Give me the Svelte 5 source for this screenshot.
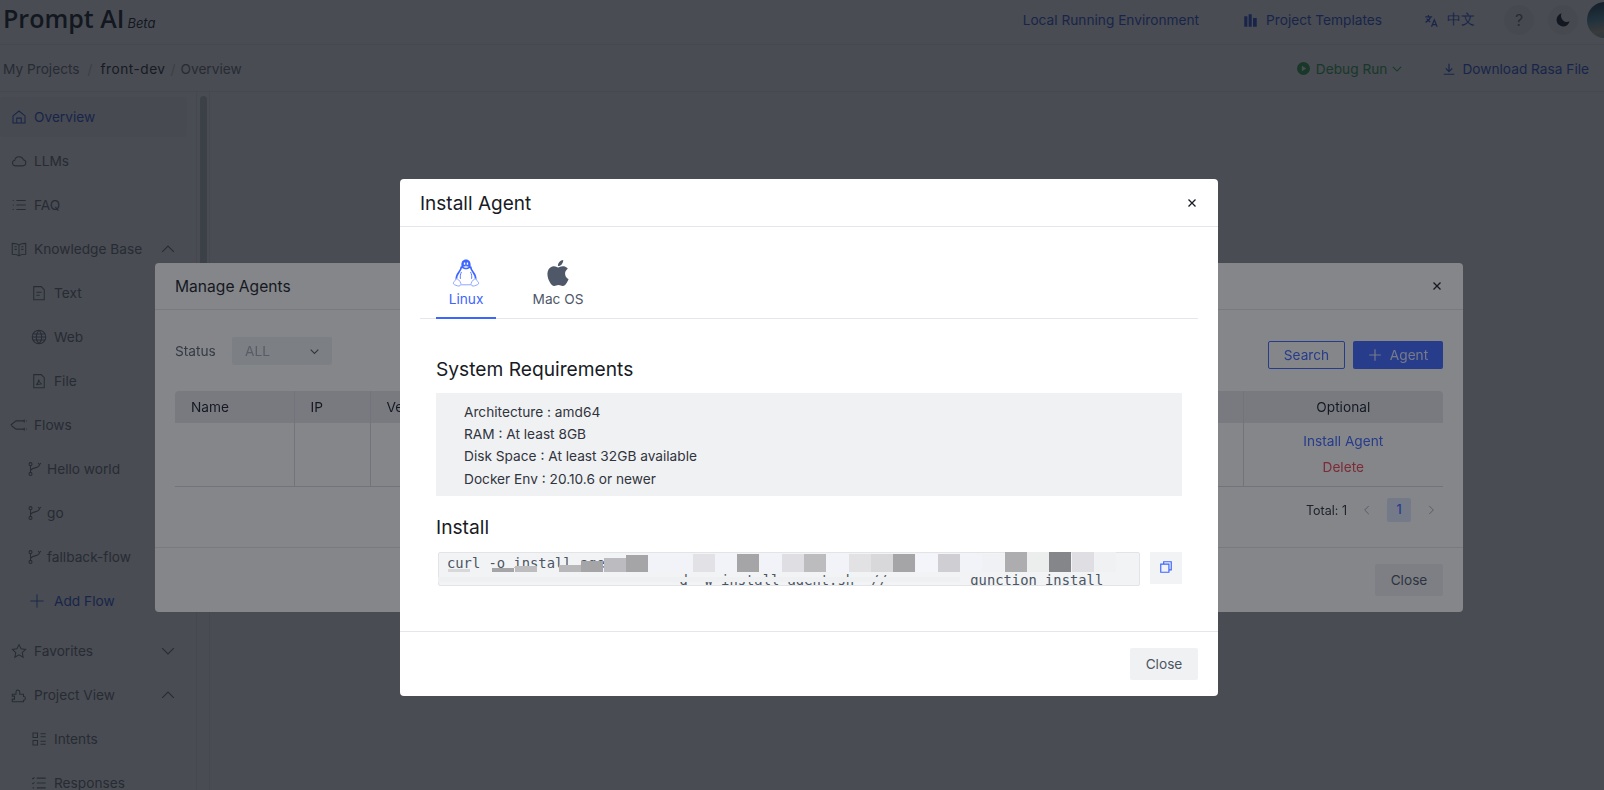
<script>
  const icons = {
    home: 'M4 10.5 12 4l8 6.5V20H4z M9 20v-6.5h6V20',
    cloud: 'M7 18.5h10a4.2 4.2 0 0 0 .8-8.3A6 6 0 0 0 6.3 11 3.8 3.8 0 0 0 7 18.5z',
    list: 'M8.5 6H21 M8.5 12H21 M8.5 18H21 M3.5 6h1.5 M3.5 12h1.5 M3.5 18h1.5',
    book: 'M12 6.5C10 5 7 4.5 3 4.5v14.5c4 0 7 .5 9 2 2-1.500 5-2 9-2V4.500c-4 0-7 .5-9 2z M12 6.500V21 M6 9h3 M6 12.500h3 M15 9h3 M15 12.500h3',
    doc: 'M5 3.500h10l4 4V21H5z M8.500 11h7 M8.500 15h4.500',
    globe: 'M12 3a9 9 0 1 0 0 18 9 9 0 0 0 0-18z M3 12h18 M4.500 8h15 M4.500 16h15 M12 3c-5 5-5 13 0 18 M12 3c5 5 5 13 0 18',
    pdf: 'M5 3.500h10l4 4V21H5z M8.500 17c2-1.500 3-4.500 3-7 .5 3 2 5 4 6-2-.2-4.500.2-7 1z',
    flows: 'M1 12 8 6.500h11 M1 12l7 5.500h11 M19 4.500v4 M19 15.500v4 M21.500 6.500h1 M21.500 17.500h1',
    branch: 'M6 7v10 M18 6c0 6-12 3-12 9 M6 3.500a2 2 0 1 0 0 4 2 2 0 0 0 0-4z M6 16.500a2 2 0 1 0 0 4 2 2 0 0 0 0-4z M16 4l2 2 2-2',
    plus: 'M12 2v20 M2 12h20',
    star: 'M12 3.500l2.700 5.600 6.100.8-4.500 4.200 1.200 6.100L12 17.200l-5.500 3 1.200-6.100-4.500-4.200 6.100-.8z',
    puzzle: 'M3 11h5V8a2.500 2.500 0 0 1 5 0v3h5v3a2.500 2.500 0 0 1 0 5v2H3v-3.500h3v-4H3z',
    intents: 'M4 4h6v6H4z M4 14h6v6H4z M14 5h7 M14 9h7 M14 15h7 M14 19h7',
    responses: 'M9 5.500h12 M9 12h12 M9 18.500h12 M3 5.500l1 1 2-2 M3 12l1 1 2-2 M3.500 18.500h2',
    up: 'M5 15.500l7-7 7 7',
    down: 'M5 8.500l7 7 7-7'
  };

  const nav = [
    { label: 'Overview', icon: 'home', cls: 'active' },
    { label: 'LLMs', icon: 'cloud' },
    { label: 'FAQ', icon: 'list' },
    { label: 'Knowledge Base', icon: 'book', arrow: 'up' },
    { label: 'Text', icon: 'doc', cls: 'sub' },
    { label: 'Web', icon: 'globe', cls: 'sub' },
    { label: 'File', icon: 'pdf', cls: 'sub' },
    { label: 'Flows', icon: 'flows' },
    { label: 'Hello world', icon: 'branch', cls: 'flow' },
    { label: 'go', icon: 'branch', cls: 'flow' },
    { label: 'fallback-flow', icon: 'branch', cls: 'flow' },
    { label: 'Add Flow', icon: 'plus', cls: 'add' },
    { label: 'Favorites', icon: 'star', arrow: 'down', cls: 'group' },
    { label: 'Project View', icon: 'puzzle', arrow: 'up' },
    { label: 'Intents', icon: 'intents', cls: 'sub' },
    { label: 'Responses', icon: 'responses', cls: 'sub' }
  ];

  const requirements = [
    'Architecture : amd64',
    'RAM : At least 8GB',
    'Disk Space : At least 32GB available',
    'Docker Env : 20.10.6 or newer'
  ];

  // redacted part of the command: [left, top, color]
  const mosaic = [
    [448, 569, '#d8d8da'], [492, 568, '#a5a5a8'], [515, 566, '#bdbdc0'],
    [559, 565, '#b8b8ba'], [581, 561, '#a5a5a8'], [604, 558, '#bcbcc0'],
    [626, 555, '#a5a5a8'], [648, 554, '#f2f3f8'], [670, 554, '#f2f3f8'],
    [693, 554, '#e2e2e6'], [715, 554, '#f2f3f8'], [737, 554, '#a5a5a8'],
    [760, 554, '#f2f3f8'], [782, 554, '#dfdfe3'], [804, 554, '#bcbcbf'],
    [827, 554, '#f2f3f8'], [849, 554, '#e2e2e4'], [871, 554, '#d8d8da'],
    [893, 554, '#a5a5a8'], [916, 554, '#f4f5fa'], [938, 554, '#cfcfd3'],
    [960, 554, '#f2f3f8'], [982, 554, '#f0f1f5'], [1005, 552, '#adadb0'],
    [1027, 552, '#eceeee'], [1049, 552, '#858689'], [1072, 552, '#dfdfe3'],
    [1094, 552, '#f0f1f3']
  ];
</script>

<div class="page">
  <header class="topbar">
    <div class="brand"><span>Prompt AI</span><em>Beta</em></div>
    <nav class="topnav">
      <a class="local">Local Running Environment</a>
      <a class="templates">
        <svg viewBox="0 0 24 24" width="15" height="15" fill="currentColor"><path d="M2 5h5v17H2z M9 2h5v20H9z M16 8h6v14h-6z" /></svg>
        Project Templates
      </a>
      <a class="lang">
        <svg viewBox="0 0 24 24" width="15" height="15" fill="none" stroke="currentColor" stroke-width="2"><path d="M2 6h11 M7 3v3 M10.500 6c-1 4-4 7-8 9 M4.500 9c1 2.500 3 4 5.500 5.500 M12 22l4.500-11L21 22 M13.500 18.500h6" /></svg>
        中文
      </a>
      <button class="round">?</button>
      <button class="round moon">
        <svg viewBox="0 0 24 24" width="16" height="16" fill="currentColor"><path d="M10 2a10 10 0 1 0 12 12A9 9 0 0 1 10 2z" /></svg>
      </button>
      <span class="avatar"></span>
    </nav>
  </header>

  <div class="crumbs">
    <span>My Projects</span><i>/</i><span class="dark">front-dev</span><i>/</i><span>Overview</span>
    <div class="actions">
      <a class="debug">
        <svg viewBox="0 0 24 24" width="13" height="13"><circle cx="12" cy="12" r="12" fill="currentColor" /><path d="M9 7l8 5-8 5z" fill="#fff" /></svg>
        Debug Run
        <svg class="chev" viewBox="0 0 24 24" width="14" height="14" fill="none" stroke="currentColor" stroke-width="2"><path d={icons.down} /></svg>
      </a>
      <a class="download">
        <svg viewBox="0 0 24 24" width="14" height="14" fill="none" stroke="currentColor" stroke-width="2"><path d="M12 3v13 M6.500 11l5.500 5.500 5.500-5.500 M3 21h18" /></svg>
        Download Rasa File
      </a>
    </div>
  </div>

  <div class="main">
    <aside class="sidebar">
      {#each nav as item}
        <div class="item {item.cls ?? ''}">
          <svg viewBox="0 0 24 24" fill="none" stroke="currentColor" stroke-width="1.4"><path d={icons[item.icon]} /></svg>
          <span>{item.label}</span>
          {#if item.arrow}
            <svg class="arrow" viewBox="0 0 24 24" fill="none" stroke="currentColor" stroke-width="1.4"><path d={icons[item.arrow]} /></svg>
          {/if}
        </div>
      {/each}
    </aside>
    <div class="track"><div class="thumb"></div></div>
    <div class="content"></div>
  </div>
</div>

<div class="overlay">
  <section class="dialog manage">
    <div class="dialog-head">
      <h2>Manage Agents</h2>
      <svg class="close" viewBox="0 0 12 12" width="12" height="12" fill="none" stroke="currentColor" stroke-width="1.300"><path d="M2.500 2.500l7 7 M9.500 2.500l-7 7" /></svg>
    </div>
    <div class="manage-body">
      <div class="filters">
        <label for="status">Status</label>
        <div id="status" class="select">ALL
          <svg viewBox="0 0 24 24" width="13" height="13" fill="none" stroke="currentColor" stroke-width="2"><path d={icons.down} /></svg>
        </div>
        <button class="outline">Search</button>
        <button class="primary">
          <svg viewBox="0 0 24 24" width="14" height="14" fill="none" stroke="currentColor" stroke-width="2"><path d={icons.plus} /></svg>
          Agent
        </button>
      </div>
      <table>
        <colgroup><col style="width:119px" /><col style="width:76px" /><col /><col style="width:200px" /></colgroup>
        <thead>
          <tr><th>Name</th><th>IP</th><th>Version</th><th class="center">Optional</th></tr>
        </thead>
        <tbody>
          <tr>
            <td></td><td></td><td></td>
            <td class="center ops"><a>Install Agent</a><a class="del">Delete</a></td>
          </tr>
        </tbody>
      </table>
      <div class="pager">
        <span>Total: 1</span>
        <svg viewBox="0 0 24 24" width="14" height="14" fill="none" stroke="currentColor" stroke-width="1.600"><path d="M15 5l-7 7 7 7" /></svg>
        <b>1</b>
        <svg viewBox="0 0 24 24" width="14" height="14" fill="none" stroke="currentColor" stroke-width="1.600"><path d="M9 5l7 7-7 7" /></svg>
      </div>
    </div>
    <div class="dialog-foot"><button class="plain">Close</button></div>
  </section>
</div>

<div class="overlay">
  <section class="dialog install">
    <div class="dialog-head">
      <h2>Install Agent</h2>
      <svg class="close" viewBox="0 0 12 12" width="12" height="12" fill="none" stroke="currentColor" stroke-width="1.300"><path d="M2.500 2.500l7 7 M9.500 2.500l-7 7" /></svg>
    </div>
    <div class="install-body">
      <div class="tabs">
        <div class="tab current">
          <svg viewBox="0 0 26 28" width="28" height="30" fill="none" stroke="currentColor">
            <path d="M13 1.500c-3 0-4.300 2.200-4.300 4.800v2.500c1.200.8 2.800 1.700 4.300 1.700s3.100-.9 4.300-1.700V6.300c0-2.600-1.300-4.800-4.300-4.800z" fill="currentColor" stroke="none" />
            <path d="M11 4.200h1.300v2H11z M13.700 4.200H15v2h-1.300z" fill="#fff" stroke="none" />
            <path d="M10.200 8.200c1 .9 1.900 1.300 2.800 1.300s1.800-.4 2.800-1.300c-1-.4-1.900-1-2.800-1s-1.800.6-2.800 1z" fill="#c4d0ff" stroke="none" />
            <path d="M8.700 8c0 2-1 3.500-2.200 5-1.500 2-2.700 4-2.500 6.500 M17.300 8c0 2 1 3.500 2.200 5 1.500 2 2.700 4 2.500 6.500" stroke-width="1.600" />
            <path d="M8.800 13c-1 2-1.500 4-1 6.500 M17.200 13c1 2 1.500 4 1 6.500" stroke-width="0.800" />
            <path d="M1.200 23.500c0-1.200 1.800-2 2.400-4 1.700-.3 3.900 1.700 4.600 4.300.4 1.700-1.200 2.900-3.100 2.200-1.900-.8-3.900-1-3.900-2.500z M24.800 23.500c0-1.200-1.800-2-2.400-4-1.700-.3-3.900 1.700-4.600 4.300-.4 1.700 1.200 2.900 3.100 2.200 1.900-.8 3.900-1 3.900-2.500z M8.500 25h9" stroke="#8aa2ff" stroke-width="0.900" fill="#fff" />
          </svg>
          <span>Linux</span>
        </div>
        <div class="tab">
          <svg viewBox="0 0 24 24" width="26" height="26" fill="currentColor"><path d="M12.152 6.896c-.948 0-2.415-1.078-3.960-1.040-2.040.027-3.910 1.183-4.961 3.014-2.117 3.675-.546 9.103 1.519 12.090 1.013 1.454 2.208 3.090 3.792 3.039 1.520-.065 2.090-.987 3.935-.987 1.831 0 2.350.987 3.960.948 1.637-.026 2.676-1.480 3.676-2.948 1.156-1.688 1.636-3.325 1.662-3.415-.039-.013-3.182-1.221-3.220-4.857-.026-3.040 2.480-4.494 2.597-4.559-1.429-2.090-3.623-2.324-4.390-2.376-2-.156-3.675 1.090-4.610 1.090zM15.530 3.830c.843-1.012 1.400-2.427 1.245-3.830-1.207.052-2.662.805-3.532 1.818-.78.896-1.454 2.338-1.273 3.714 1.338.104 2.715-.688 3.559-1.701" /></svg>
          <span>Mac OS</span>
        </div>
      </div>

      <h3 class="first">System Requirements</h3>
      <ul class="reqs">
        {#each requirements as line}
          <li>{line}</li>
        {/each}
      </ul>

      <h3>Install</h3>
      <div class="command">
        <pre>curl -o install_agent
                            d -w install_agent.sh  //  -- -- _ gunction install</pre>
        <button class="copy" aria-label="copy">
          <svg viewBox="0 0 24 24" width="14" height="14" fill="none" stroke="currentColor" stroke-width="2"><path d="M8 7V3h13v14h-4 M3 7h14v14H3z" /></svg>
        </button>
      </div>
    </div>
    <div class="dialog-foot"><button class="plain">Close</button></div>
  </section>
</div>

<div class="redact">
  {#each mosaic as [left, top, color]}
    <span class="cell" style="left:{left}px;top:{top}px;height:{572 - top}px;background:{color}"></span>
  {/each}
  <span class="band"></span>
</div>

<style>
  :global(body) {
    background: #fff;
    overflow: hidden;
    font-family: Inter, 'Liberation Sans', sans-serif;
    font-size: 13.7px;
    color: #111827;
  }

  .page {
    height: 790px;
    display: flex;
    flex-direction: column;
    overflow: hidden;
  }

  .topbar {
    height: 45px;
    flex: none;
    display: flex;
    align-items: flex-start;
    justify-content: space-between;
    border-bottom: 1px solid #eef0f3;
    box-sizing: border-box;
  }

  .brand {
    display: flex;
    align-items: baseline;
    gap: 3px;
    margin: 1px 0 0 3px;
    font-family: 'Open Sans', sans-serif;
    font-size: 25px;
    font-weight: 600;
    line-height: 34px;
    color: #111827;
  }

  .brand em {
    font-family: Inter, sans-serif;
    font-size: 13px;
    font-weight: 400;
  }

  .topnav {
    display: flex;
    align-items: center;
    height: 40px;
    color: #2f55e0;
  }

  .topnav a {
    display: flex;
    align-items: center;
    gap: 8px;
  }

  .local {
    margin-right: 44px;
  }

  .templates {
    margin-right: 42px;
  }

  .lang {
    margin-right: 29px;
  }

  .round {
    width: 30px;
    height: 30px;
    border: 0;
    border-radius: 50%;
    background: #f4f5f7;
    color: #6b7280;
    font: 16px Inter, sans-serif;
    padding: 0;
    margin-right: 14px;
    display: flex;
    align-items: center;
    justify-content: center;
  }

  .moon {
    color: #111827;
    margin-right: 9px;
  }

  .avatar {
    width: 36px;
    height: 36px;
    margin-right: -19px;
    border-radius: 50%;
    background: linear-gradient(170deg, #16324a 0%, #4f8ea6 45%, #b9b09a 75%, #7ca7b8 100%);
  }

  .crumbs {
    height: 47px;
    flex: none;
    box-sizing: border-box;
    display: flex;
    align-items: center;
    padding: 1px 15px 0 3px;
    border-bottom: 1px solid #eef0f3;
    color: #6b7280;
  }

  .crumbs i {
    font-style: normal;
    margin: 0 8px;
    color: #c6c9d0;
  }

  .crumbs .dark {
    color: #262a33;
    letter-spacing: 0.5px;
  }

  .crumbs .dark + i {
    margin: 0 5px;
  }

  .actions {
    margin-left: auto;
    display: flex;
    align-items: center;
    gap: 38px;
  }

  .actions a {
    display: flex;
    align-items: center;
    gap: 6px;
  }

  .debug {
    color: #2fa84f;
  }

  .chev {
    margin-left: -3px;
  }

  .download {
    color: #2f55e0;
  }

  .main {
    flex: 1;
    display: flex;
    min-height: 0;
  }

  .sidebar {
    width: 197px;
    flex: none;
    box-sizing: border-box;
    padding: 5px 9px 0 0;
    border-right: 1px solid #eef0f3;
    color: #6b7280;
  }

  .item {
    height: 40px;
    margin-bottom: 4px;
    display: flex;
    align-items: center;
    padding-left: 10px;
    border-radius: 4px;
  }

  .item svg {
    width: 18px;
    height: 18px;
    flex: none;
    margin-right: 6px;
  }

  .item .arrow {
    width: 20px;
    height: 20px;
    margin: 0 0 0 auto;
    position: relative;
    left: -9px;
  }

  .item.active {
    background: #f6f7f9;
    color: #2f55e0;
  }

  .item.sub {
    padding-left: 30px;
  }

  .item.flow {
    padding-left: 26px;
  }

  .item.flow svg {
    margin-right: 3px;
  }

  .item.add {
    padding-left: 29px;
    color: #2f55e0;
    margin-bottom: 10px;
  }

  .item.add svg {
    width: 16px;
    height: 16px;
    margin-right: 9px;
  }

  .track {
    width: 13px;
    flex: none;
    box-sizing: border-box;
    padding: 4px 2px 0 3px;
    border-right: 1px solid #eef0f3;
  }

  .thumb {
    height: 500px;
    background: #c9ccd2;
    border-radius: 4px;
  }

  .content {
    flex: 1;
  }

  .overlay {
    position: fixed;
    inset: 0;
    box-sizing: border-box;
    padding: 85px 0 0 14px;
    display: flex;
    align-items: center;
    justify-content: center;
    background: rgba(19, 23, 30, 0.52);
  }

  .dialog {
    background: #fff;
    border-radius: 4px;
    display: flex;
    flex-direction: column;
  }

  .dialog-head {
    height: 47px;
    flex: none;
    box-sizing: border-box;
    padding: 0 20px;
    display: flex;
    align-items: center;
    justify-content: space-between;
    border-bottom: 1px solid #e5e6eb;
    color: #181b25;
  }

  .install .dialog-head {
    height: 48px;
    padding-top: 1px;
  }

  h2 {
    margin: 0;
    font-size: 15.600px;
    font-weight: 400;
    color: #181b25;
  }

  .install h2 {
    font-size: 19px;
  }

  .dialog-foot {
    flex: none;
    height: 65px;
    box-sizing: border-box;
    padding: 16px 20px 0;
    display: flex;
    justify-content: flex-end;
    border-top: 1px solid #e5e6eb;
  }

  button {
    font-family: Inter, sans-serif;
    font-size: 13.700px;
  }

  .plain {
    width: 68px;
    height: 32px;
    padding: 0;
    border: 0;
    border-radius: 2px;
    background: #f0f1f3;
    color: #4b5563;
  }

  .manage {
    width: 1308px;
    height: 349px;
  }

  .manage-body {
    flex: 1;
    padding: 27px 20px 0;
  }

  .filters {
    display: flex;
    align-items: flex-end;
    height: 32px;
    color: #5b6270;
  }

  .filters label {
    width: 57px;
    align-self: flex-start;
    line-height: 28px;
  }

  .select {
    align-self: flex-start;
    width: 100px;
    height: 28px;
    box-sizing: border-box;
    padding: 0 11px 0 13px;
    background: #eef0f3;
    border-radius: 2px;
    color: #a3a8b3;
    display: flex;
    align-items: center;
    justify-content: space-between;
  }

  .select svg {
    color: #4b5563;
  }

  .outline {
    margin-left: auto;
    width: 77px;
    height: 28px;
    padding: 0;
    background: transparent;
    border: 1px solid #3d65ff;
    border-radius: 2px;
    color: #3d65ff;
  }

  .primary {
    margin-left: 8px;
    width: 90px;
    height: 28px;
    padding: 0;
    border: 0;
    border-radius: 2px;
    background: #3d65ff;
    color: #dfe5ff;
    display: flex;
    align-items: center;
    justify-content: center;
    gap: 8px;
  }

  table {
    width: 100%;
    margin-top: 22px;
    border-collapse: collapse;
    table-layout: fixed;
  }

  th {
    height: 32px;
    padding: 0 0 0 16px;
    background: #e6e7eb;
    font-weight: 400;
    text-align: left;
    color: #181b25;
    border-right: 1px solid #d8d9dd;
  }

  th:first-child {
    border-radius: 4px 0 0 0;
  }

  th:last-child {
    border-right: 0;
    border-radius: 0 4px 0 0;
  }

  td {
    height: 63px;
    padding: 0;
    border-right: 1px solid #d8d9dd;
    border-bottom: 1px solid #d8d9dd;
  }

  td:last-child {
    border-right: 0;
  }

  th.center,
  td.center {
    text-align: center;
    padding: 0;
  }

  .ops a {
    display: block;
    line-height: 26px;
    color: #3d65ff;
  }

  .ops a.del {
    margin-bottom: 2px;
    color: #f0414f;
  }

  .pager {
    margin-top: 11px;
    padding-right: 5px;
    display: flex;
    align-items: center;
    justify-content: flex-end;
    gap: 13px;
    font-size: 12.500px;
    color: #2b2f38;
  }

  .pager svg {
    color: #9aa0ac;
  }

  .pager b {
    width: 24px;
    height: 24px;
    line-height: 24px;
    text-align: center;
    font-weight: 500;
    border-radius: 2px;
    color: #3d65ff;
    background: #dde6fb;
  }

  .install {
    position: relative;
    width: 818px;
    height: 517px;
  }

  .install-body {
    flex: 1;
    padding: 26px 20px 0;
  }

  .tabs {
    display: flex;
    height: 66px;
    box-sizing: border-box;
    padding-left: 16px;
    border-bottom: 1px solid #e5e6eb;
  }

  .tab {
    width: 60px;
    height: 66px;
    margin-right: 32px;
    display: flex;
    flex-direction: column;
    align-items: center;
    justify-content: flex-end;
    gap: 5px;
    box-sizing: border-box;
    padding-bottom: 12px;
    color: #4f5868;
    white-space: nowrap;
  }

  .tab.current {
    color: #3d65ff;
    border-bottom: 2px solid #3d65ff;
    padding-bottom: 10px;
    gap: 3px;
  }

  h3 {
    margin: 19px 16px 13px;
    font-size: 19.200px;
    font-weight: 400;
    line-height: 24px;
    color: #181b25;
  }

  h3.first {
    margin-top: 38px;
    margin-bottom: 12px;
  }

  .reqs {
    list-style: none;
    margin: 0 16px;
    padding: 8px 28px;
    height: 103px;
    box-sizing: border-box;
    background: #f0f1f3;
    color: #30343d;
  }

  .reqs li {
    line-height: 22.200px;
  }

  .command {
    margin: 0 16px 0 18px;
    display: flex;
    gap: 10px;
  }

  pre {
    flex: 1;
    height: 34px;
    margin: 0;
    padding: 2px 8px;
    box-sizing: border-box;
    overflow: hidden;
    background: #f2f3f5;
    border: 1px solid #e3e4e8;
    border-radius: 2px;
    font-family: 'DejaVu Sans Mono', monospace;
    font-size: 13.800px;
    line-height: 17px;
    color: #4b5563;
  }

  .copy {
    width: 32px;
    height: 32px;
    padding: 0;
    border: 0;
    background: #f2f3f5;
    color: #3d65ff;
  }

  .redact {
    position: fixed;
    inset: 0;
    pointer-events: none;
  }

  .cell {
    position: absolute;
    width: 22.200px;
  }

  .band {
    position: absolute;
    left: 438px;
    top: 577px;
    width: 522px;
    height: 5px;
    background: #eff0f2;
  }
</style>
